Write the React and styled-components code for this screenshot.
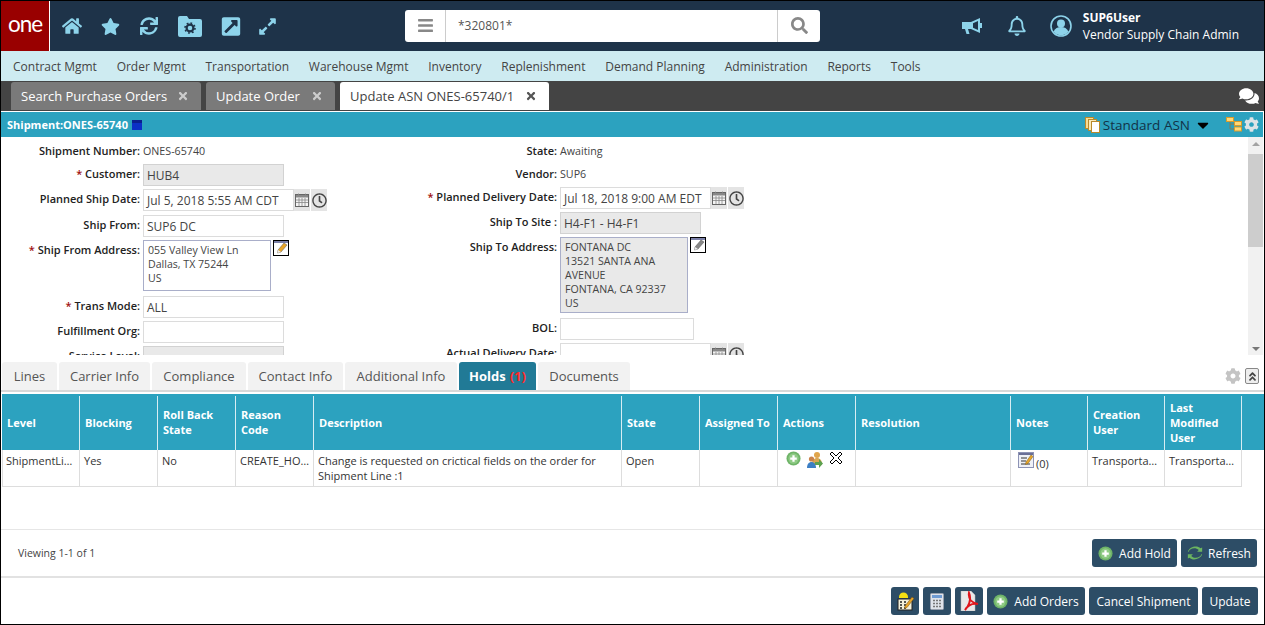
import React from "react";
import styled, { createGlobalStyle } from "styled-components";
import {
  FaHome, FaStar, FaSync, FaExpandAlt, FaRegBell, FaBars, FaSearch,
  FaTimes, FaRegClock, FaComments, FaCaretDown, FaCog, FaExternalLinkSquareAlt, FaAngleDoubleUp,
} from "react-icons/fa";

const GlobalStyle = createGlobalStyle`
  html, body { margin: 0; padding: 0; background: #fff; overflow: hidden; }
  * { box-sizing: border-box; }
  body { font-family: "Open Sans", "Liberation Sans", sans-serif; font-size: 11px; color: #333; }
`;

const Frame = styled.div`
  width: 1265px;
  height: 625px;
  border: 1px solid #000;
  display: flex;
  flex-direction: column;
  overflow: hidden;
  background: #fff;
`;

const Header = styled.header`
  height: 50px;
  background: #1e3349;
  display: flex;
  align-items: center;
  flex: none;
`;

const Logo = styled.div`
  width: 49px;
  height: 50px;
  background: #990000;
  border-right: 1px solid #fff;
  color: #fff;
  font-family: "Lato", sans-serif;
  font-weight: 400;
  font-size: 22.5px;
  letter-spacing: -1px;
  display: flex;
  align-items: center;
  justify-content: center;
  padding-bottom: 5px;
`;

const NavIcons = styled.div`
  width: 355px;
  display: flex;
  align-items: center;
  color: #8dd3ea;
  padding-left: 12px;
`;

const NavIcon = styled.span`
  width: ${(p) => p.$w}px;
  display: flex;
  justify-content: center;
  font-size: ${(p) => p.$size || 20}px;
`;

const SearchBox = styled.div`
  width: 415px;
  height: 32px;
  margin-top: -1px;
  background: #fff;
  border-radius: 3px;
  display: flex;
  color: #888;
`;

const SearchMenu = styled.div`
  width: 41px;
  border-right: 1px solid #ccc;
  display: flex;
  align-items: center;
  justify-content: center;
  font-size: 17px;
`;

const SearchText = styled.div`
  flex: 1;
  padding-left: 12px;
  line-height: 31px;
  font-size: 12px;
  color: #555;
`;

const SearchButton = styled.div`
  width: 43px;
  border-left: 1px solid #ccc;
  display: flex;
  align-items: center;
  justify-content: center;
  font-size: 17px;
`;

const HeaderRight = styled.div`
  margin-left: auto;
  display: flex;
  align-items: center;
  color: #8dd3ea;
  padding-right: 25px;
`;

const HeaderIcon = styled.span`
  display: flex;
  font-size: ${(p) => p.$size}px;
  margin-right: ${(p) => p.$mr}px;
`;

const UserText = styled.div`
  color: #fff;
  font-size: 12px;
  line-height: 17px;
  & b { display: block; font-weight: 700; }
`;

const MenuBar = styled.nav`
  height: 30px;
  flex: none;
  background: #ceebf1;
  display: flex;
  align-items: center;
  padding-left: 12px;
  gap: 19.8px;
  font-size: 12px;
  color: #444;
`;

const TabStrip = styled.div`
  height: 30px;
  flex: none;
  background: #444;
  display: flex;
  align-items: flex-end;
  padding-left: 10px;
  padding-bottom: 1px;
  gap: 5px;
`;

const PageTab = styled.div`
  height: 28px;
  width: ${(p) => p.$w}px;
  padding: 0 12px 0 10px;
  background: ${(p) => (p.$active ? "#fff" : "#7a7a7a")};
  color: ${(p) => (p.$active ? "#444" : "#fff")};
  border-radius: 3px 3px 0 0;
  display: flex;
  align-items: center;
  justify-content: space-between;
  font-size: 13px;
  & svg { color: ${(p) => (p.$active ? "#555" : "#ccc")}; font-size: 12px; }
`;

const ChatIcon = styled.span`
  margin-left: auto;
  margin-right: 5px;
  color: #fff;
  font-size: 20px;
  display: flex;
  align-self: center;
`;

const SectionBar = styled.div`
  height: 25px;
  flex: none;
  margin-top: 1px;
  margin-right: 1px;
  background: #2ca2bf;
  display: flex;
  align-items: center;
  padding: 0 4px 0 6px;
  color: #fff;
  font-weight: 700;
  font-size: 11px;
`;

const BlueBox = styled.span`
  width: 10px;
  height: 10px;
  margin-left: 4px;
  background: #0b2fc6;
  border-top: 3px solid #0a1f8f;
`;

const ViewName = styled.span`
  margin-left: auto;
  display: flex;
  align-items: center;
  gap: 2px;
  font-weight: 400;
  font-size: 13.5px;
  color: #123247;
`;

const ViewCaret = styled.span`
  display: flex;
  margin-left: 2px;
  font-size: 18px;
  color: #000;
`;

const BarIcons = styled.span`
  display: flex;
  align-items: center;
  gap: 2px;
  margin-left: 14px;
`;

const BarCog = styled.span`
  display: flex;
  color: #dde3e6;
  font-size: 15px;
`;

const FormArea = styled.div`
  height: 218px;
  flex: none;
  display: flex;
`;

const FormColumns = styled.div`
  flex: 1;
  height: 218px;
  overflow: hidden;
  display: grid;
  grid-template-columns: 417px 1fr;
  padding-top: 4px;
`;

const FormColumn = styled.div`
  display: flex;
  flex-direction: column;
  gap: 3px;
`;

const Row = styled.div`
  display: grid;
  grid-template-columns: 139px auto;
  justify-content: start;
  column-gap: 3px;
  align-items: start;
  margin-top: ${(p) => p.$top || 0}px;
`;

const Label = styled.label`
  text-align: right;
  font-weight: 600;
  line-height: 20px;
  font-size: 11px;
  color: #222;
  white-space: nowrap;
  & i { font-style: normal; color: #a01010; }
`;

const Value = styled.span`
  line-height: 20px;
  font-size: 10.7px;
  color: #444;
`;

const Input = styled.div`
  width: ${(p) => p.$w || 141}px;
  height: 22px;
  border: 1px solid ${(p) => (p.$readOnly ? "#d2d2d2" : "#dcdcdc")};
  background: ${(p) => (p.$readOnly ? "#e9e9e9" : "#fff")};
  font-size: 12px;
  color: #444;
  line-height: 21px;
  padding-left: 3px;
  white-space: nowrap;
`;

const DateField = styled.div`
  display: flex;
`;

const DateAddon = styled.span`
  width: 17px;
  height: 22px;
  background: #e4e4e4;
  border-right: 1px solid #fff;
  display: flex;
  align-items: center;
  justify-content: center;
  color: #444;
  font-size: 15px;
`;

const AddressWrap = styled.div`
  display: flex;
  align-items: flex-start;
  gap: 2px;
`;

const AddressBox = styled.div`
  width: 128px;
  height: ${(p) => p.$h}px;
  border: 1px solid #a9aec9;
  background: ${(p) => (p.$readOnly ? "#e9e9e9" : "#fff")};
  padding: 2px 4px;
  font-size: 10.6px;
  line-height: 14px;
  color: #444;
`;

const Scrollbar = styled.div`
  width: 15px;
  margin: 0 1px 0 0;
  background: #f1f1f1;
  display: flex;
  flex-direction: column;
  align-items: center;
  padding: 5px 0 4px;
`;

const Thumb = styled.div`
  width: 15px;
  height: 93px;
  background: #cdcdcd;
  margin-top: 8px;
  margin-bottom: auto;
`;

const Arrow = styled.span`
  width: 0;
  height: 0;
  border-left: 4px solid transparent;
  border-right: 4px solid transparent;
  ${(p) => (p.$down ? "border-top: 4px solid #777;" : "border-bottom: 4px solid #a3a3a3;")}
`;

const LowerTabs = styled.div`
  height: 30px;
  margin-top: 7px;
  flex: none;
  display: flex;
  align-items: flex-start;
  padding-left: 1px;
  gap: 2px;
  border-bottom: 2px solid #d8d8d8;
`;

const LowerTab = styled.div`
  height: 28px;
  width: ${(p) => p.$w}px;
  background: ${(p) => (p.$active ? "#217a96" : "#f2f2f2")};
  color: ${(p) => (p.$active ? "#fff" : "#555")};
  font-weight: ${(p) => (p.$active ? 700 : 400)};
  border-radius: 3px 3px 0 0;
  font-size: 13px;
  display: flex;
  align-items: center;
  justify-content: center;
  flex: none;
  & em { font-style: normal; color: #ff2a2a; margin-left: 4px; }
`;

const TabTools = styled.div`
  margin-left: auto;
  margin-right: 5px;
  height: 28px;
  display: flex;
  align-items: center;
  gap: 4px;
  color: #c4c4c4;
  font-size: 16px;
`;

const CollapseButton = styled.span`
  width: 14px;
  height: 16px;
  border: 1px solid #888;
  border-radius: 2px;
  background: #eee;
  color: #444;
  font-size: 11px;
  display: flex;
  align-items: center;
  justify-content: center;
`;

const TableArea = styled.div`
  height: 136px;
  flex: none;
  margin-top: 2px;
  padding-left: 1px;
  border-bottom: 1px solid #e6e6e6;
`;

const COLS = "78px 78px 78px 78px 308px 78px 78px 78px 155px 77px 77px 77px";

const HeadRow = styled.div`
  height: 56px;
  background: #2ca2bf;
  display: grid;
  grid-template-columns: ${COLS} 1fr;
`;

const HeadCell = styled.div`
  border-right: 1px solid #d7edf3;
  color: #fff;
  font-weight: 700;
  font-size: 11px;
  line-height: 15px;
  padding: 0 3px 2px 5px;
  display: flex;
  align-items: center;
  white-space: pre-line;
  margin-top: 2px;
`;

const HeadEnd = styled.div``;

const BodyRow = styled.div`
  display: grid;
  grid-template-columns: ${COLS};
  width: max-content;
  height: 37px;
  border-bottom: 1px solid #ddd;
`;

const BodyCell = styled.div`
  border-right: 1px solid #ddd;
  border-left: ${(p) => (p.$first ? "1px solid #ddd" : "0")};
  font-size: 11px;
  line-height: 15px;
  color: #333;
  padding: 3px 3px 0 ${(p) => (p.$first ? 3 : 4)}px;
  overflow: hidden;
  white-space: ${(p) => (p.$wrap ? "normal" : "nowrap")};
  text-overflow: ellipsis;
`;

const ActionIcons = styled.div`
  display: flex;
  align-items: flex-start;
  gap: 5px;
  padding-left: 4px;
  margin-top: -2px;
`;

const NoteCell = styled.div`
  display: flex;
  align-items: flex-end;
  gap: 2px;
  padding-left: 3px;
  margin-top: -1px;
`;

const NoteCount = styled.span`
  line-height: 14px;
  margin-bottom: -3px;
`;

const Pager = styled.div`
  height: 48px;
  flex: none;
  display: flex;
  align-items: center;
  justify-content: space-between;
  padding: 0 7px 0 17px;
  border-bottom: 2px solid #e2e2e2;
  font-size: 10.5px;
  color: #444;
`;

const ButtonRow = styled.div`
  display: flex;
  gap: 4px;
`;

const ActionBar = styled(ButtonRow)`
  flex: 1;
  align-items: center;
  justify-content: flex-end;
  padding: 0 6px 0 0;
`;

const Button = styled.button`
  height: 28px;
  width: ${(p) => p.$w}px;
  padding: 0;
  border: 0;
  border-radius: 3px;
  background: #2d4d66;
  color: #fff;
  font-family: inherit;
  font-size: 12px;
  display: flex;
  align-items: center;
  justify-content: center;
  gap: ${(p) => p.$gap ?? 6}px;
`;

const GreenPlus = ({ size = 15 }) => (
  <svg width={size} height={size} viewBox="0 0 16 16">
    <circle cx="8" cy="8" r="7.5" fill="#6fb468" />
    <circle cx="8" cy="8" r="5.5" fill="#8fcb85" />
    <path d="M8 4.5v7M4.5 8h7" stroke="#fff" strokeWidth="2.4" />
  </svg>
);

const AssignIcon = () => (
  <svg width="18" height="18" viewBox="0 0 18 18">
    <circle cx="11" cy="4" r="3" fill="#e0a54c" />
    <path d="M6 14c0-5 2-7 5-7s5 2 5 7z" fill="#d9a653" />
    <circle cx="5.5" cy="8" r="2.6" fill="#c9824a" />
    <path d="M1 17c0-4 2-6 4.5-6S10 13 10 17z" fill="#3d7fc4" />
    <path d="M9 11h4V8l4 4.5-4 4.5v-3H9z" fill="#5da14f" />
  </svg>
);

const CrossOutline = () => (
  <svg width="14" height="14" viewBox="0 0 14 14">
    <path d="M3 1 7 5l4-4 2 2-4 4 4 4-2 2-4-4-4 4-2-2 4-4-4-4z" fill="#fff" stroke="#000" strokeWidth="1" />
  </svg>
);

const NoteIcon = () => (
  <svg width="16" height="16" viewBox="0 0 16 16">
    <rect x="0.5" y="0.5" width="15" height="15" fill="#eef0f7" stroke="#8d93b5" />
    <rect x="1" y="1" width="14" height="2" fill="#6a6f96" />
    <path d="M3 6h6M3 9h5M3 12h9" stroke="#333" />
    <path d="M8 10l5-7 2 1.5-5 7-2.5 1z" fill="#e8a52a" stroke="#7a5a10" strokeWidth=".5" />
  </svg>
);

const EditBox = ({ grey }) => (
  <svg width="16" height="16" viewBox="0 0 16 16">
    <rect x="0.5" y="0.5" width="15" height="15" fill="#fff" stroke="#000" />
    <rect x="1" y="1" width="14" height="2" fill="#7b80a8" />
    <path d="M5 10l6-7 3 2-6 7-3.5 1z" fill={grey ? "#888" : "#e8a52a"} stroke="#555" strokeWidth=".5" />
    <path d="M5 10l3 2-3.5 1z" fill="#eee" />
  </svg>
);

const CalendarIcon = () => (
  <svg width="14" height="14" viewBox="0 0 14 14">
    <rect x="0.5" y="1.5" width="13" height="12" fill="#f4f4f4" stroke="#666" />
    <rect x="1" y="2" width="12" height="2.5" fill="#888" />
    <path d="M3.5 0.5v2.5M10.5 0.5v2.5M1 7h12M1 9.5h12M4 5v8M7 5v8M10 5v8" stroke="#888" strokeWidth=".8" />
  </svg>
);

const CopyDocs = () => (
  <svg width="16" height="16" viewBox="0 0 16 16">
    <rect x="0.5" y="0.5" width="8" height="11" fill="#f7dc97" stroke="#b98a2a" />
    <rect x="3.5" y="2.5" width="8" height="11" fill="#fbe9b8" stroke="#b98a2a" />
    <rect x="6.5" y="4.5" width="8" height="11" fill="#fff" stroke="#b98a2a" />
  </svg>
);

const TreeIcon = () => (
  <svg width="16" height="15" viewBox="0 0 16 15">
    <path d="M4 4v8h6M4 7h6" stroke="#8a7a50" fill="none" />
    <rect x="0.5" y="0.5" width="7" height="4" fill="#ffd877" stroke="#d69c2e" />
    <rect x="8.5" y="4.5" width="7" height="4" fill="#ffd877" stroke="#d69c2e" />
    <rect x="8.5" y="10" width="7" height="4" fill="#ffd877" stroke="#d69c2e" />
  </svg>
);

const FolderGear = () => (
  <svg width="24" height="21" viewBox="0 0 24 21">
    <path d="M2 0h7l2 3h11a2 2 0 0 1 2 2v14a2 2 0 0 1-2 2H2a2 2 0 0 1-2-2V2a2 2 0 0 1 2-2z" fill="#8dd3ea" />
    <circle cx="12" cy="12" r="3.4" fill="none" stroke="#1e3349" strokeWidth="2.2" />
    <circle cx="12" cy="12" r="5" fill="none" stroke="#1e3349" strokeWidth="1.6" strokeDasharray="1.8 2.1" />
  </svg>
);

const Megaphone = () => (
  <svg width="21" height="17" viewBox="0 0 21 17">
    <path d="M0 4h9v7H6l1.5 5H4.5L3 11H0z" fill="#8dd3ea" />
    <path d="M9 4l9-4v15l-9-4z" fill="#8dd3ea" />
    <path d="M11 5.3l5-2.2v8.8l-5-2.2z" fill="#1e3349" />
    <path d="M18 5h2v5h-2z" fill="#8dd3ea" />
  </svg>
);

const UserCircle = () => (
  <svg width="22" height="22" viewBox="0 0 22 22">
    <circle cx="11" cy="11" r="10" fill="#1e3349" stroke="#8dd3ea" strokeWidth="1.6" />
    <circle cx="11" cy="8.5" r="4" fill="#8dd3ea" />
    <path d="M3.6 16.5c1.5-3.3 4-4.5 7.4-4.5s5.900 1.200 7.400 4.500A9.500 9.500 0 0 1 11 20.400 9.500 9.500 0 0 1 3.600 16.500z" fill="#8dd3ea" />
  </svg>
);

const WorkerIcon = () => (
  <svg width="19" height="20" viewBox="0 0 19 20">
    <rect x="2" y="8" width="14" height="11" fill="#f3f0da" stroke="#222" />
    <path d="M4 11h2M8 11h2M4 14h2M8 14h2M4 17h2M8 17h2" stroke="#222" strokeWidth="1.4" />
    <path d="M3 6a4.500 4.500 0 0 1 9 0v1H3z" fill="#f5e012" />
    <path d="M9 15l7-9 2 1.500-7 9-2.500 1z" fill="#e8a52a" stroke="#6b4a10" strokeWidth=".5" />
  </svg>
);

const CalcIcon = () => (
  <svg width="14" height="17" viewBox="0 0 14 17">
    <rect x="0.5" y="0.5" width="13" height="16" rx="1" fill="#dfe3ea" stroke="#98a0ad" />
    <rect x="2" y="2" width="10" height="3" fill="#6f9bd2" />
    <path d="M3 7.500h2M6 7.500h2M9 7.500h2M3 10.500h2M6 10.500h2M9 10.500h2M3 13.500h2M6 13.500h2M9 13.500h2" stroke="#777" strokeWidth="1.6" />
  </svg>
);

const PdfIcon = () => (
  <svg width="19" height="20" viewBox="0 0 19 20">
    <path d="M1 0h10l4 4v16H1z" fill="#e9e9e9" stroke="#bbb" strokeWidth=".5" />
    <path d="M9 2c-1 6 3 10 9 11-5-1-10 1-13 6 3-3 7-10 4-17z" fill="none" stroke="#e0161c" strokeWidth="2" />
  </svg>
);

const RefreshIcon = () => (
  <svg width="16" height="14" viewBox="0 0 19 15">
    <path d="M2 6c1-4 8-6 12-2l-2 2h6V1l-2 1C12-2 3 0 1 6z" fill="#6cb560" />
    <path d="M17 9c-1 4-8 6-12 2l2-2H1v5l2-1c4 4 13 2 15-4z" fill="#6cb560" />
  </svg>
);

const menu = ["Contract Mgmt", "Order Mgmt", "Transportation", "Warehouse Mgmt", "Inventory", "Replenishment",
  "Demand Planning", "Administration", "Reports", "Tools"];

const lowerTabs = [["Lines", 55], ["Carrier Info", 91], ["Compliance", 94], ["Contact Info", 95], ["Additional Info", 112]];

const heads = ["Level", "Blocking", "Roll Back\nState", "Reason\nCode", "Description", "State", "Assigned To", "Actions",
  "Resolution", "Notes", "Creation\nUser", "Last\nModified\nUser"];

const DateInput = ({ value }) => (
  <DateField>
    <Input $w={151}>{value}</Input>
    <DateAddon><CalendarIcon /></DateAddon>
    <DateAddon><FaRegClock /></DateAddon>
  </DateField>
);

export default function App() {
  return (
    <Frame>
      <GlobalStyle />
      <Header>
        <Logo>one</Logo>
        <NavIcons>
          <NavIcon $w={20}><FaHome /></NavIcon>
          <NavIcon $w={57} $size={19}><FaStar /></NavIcon>
          <NavIcon $w={20} $size={18}><FaSync /></NavIcon>
          <NavIcon $w={62}><FolderGear /></NavIcon>
          <NavIcon $w={20} $size={21}><FaExternalLinkSquareAlt /></NavIcon>
          <NavIcon $w={53} $size={19}><FaExpandAlt /></NavIcon>
        </NavIcons>
        <SearchBox>
          <SearchMenu><FaBars /></SearchMenu>
          <SearchText>*320801*</SearchText>
          <SearchButton><FaSearch /></SearchButton>
        </SearchBox>
        <HeaderRight>
          <HeaderIcon $size={20} $mr={24}><Megaphone /></HeaderIcon>
          <HeaderIcon $size={20} $mr={23}><FaRegBell /></HeaderIcon>
          <HeaderIcon $size={22} $mr={11}><UserCircle /></HeaderIcon>
          <UserText><b>SUP6User</b>Vendor Supply Chain Admin</UserText>
        </HeaderRight>
      </Header>

      <MenuBar>
        {menu.map((m) => <span key={m}>{m}</span>)}
      </MenuBar>

      <TabStrip>
        <PageTab $w={190}>Search Purchase Orders <FaTimes /></PageTab>
        <PageTab $w={129}>Update Order <FaTimes /></PageTab>
        <PageTab $w={209} $active>Update ASN ONES-65740/1 <FaTimes /></PageTab>
        <ChatIcon><FaComments /></ChatIcon>
      </TabStrip>

      <SectionBar>
        Shipment:ONES-65740<BlueBox />
        <ViewName>
          <CopyDocs />Standard ASN
          <ViewCaret><FaCaretDown /></ViewCaret>
        </ViewName>
        <BarIcons>
          <TreeIcon />
          <BarCog><FaCog /></BarCog>
        </BarIcons>
      </SectionBar>

      <FormArea>
        <FormColumns>
          <FormColumn>
            <Row><Label>Shipment Number:</Label><Value>ONES-65740</Value></Row>
            <Row><Label><i>*</i> Customer:</Label><Input $readOnly>HUB4</Input></Row>
            <Row><Label>Planned Ship Date:</Label><DateInput value="Jul 5, 2018 5:55 AM CDT" /></Row>
            <Row $top={1}><Label>Ship From:</Label><Input>SUP6 DC</Input></Row>
            <Row>
              <Label><i>*</i> Ship From Address:</Label>
              <AddressWrap>
                <AddressBox $h={51}>055 Valley View Ln<br />Dallas, TX 75244<br />US</AddressBox>
                <EditBox />
              </AddressWrap>
            </Row>
            <Row $top={2}><Label><i>*</i> Trans Mode:</Label><Input>ALL</Input></Row>
            <Row><Label>Fulfillment Org:</Label><Input /></Row>
            <Row><Label>Service Level:</Label><Input $readOnly /></Row>
          </FormColumn>
          <FormColumn>
            <Row><Label>State:</Label><Value>Awaiting</Value></Row>
            <Row><Label>Vendor:</Label><Value>SUP6</Value></Row>
            <Row><Label><i>*</i> Planned Delivery Date:</Label><DateInput value="Jul 18, 2018 9:00 AM EDT" /></Row>
            <Row><Label>Ship To Site :</Label><Input $readOnly>H4-F1 - H4-F1</Input></Row>
            <Row>
              <Label>Ship To Address:</Label>
              <AddressWrap>
                <AddressBox $h={76} $readOnly>FONTANA DC<br />13521 SANTA ANA AVENUE<br />FONTANA, CA 92337<br />US</AddressBox>
                <EditBox grey />
              </AddressWrap>
            </Row>
            <Row $top={2}><Label>BOL:</Label><Input $w={134} /></Row>
            <Row><Label>Actual Delivery Date:</Label><DateInput value="" /></Row>
          </FormColumn>
        </FormColumns>
        <Scrollbar>
          <Arrow />
          <Thumb />
          <Arrow $down />
        </Scrollbar>
      </FormArea>

      <LowerTabs>
        {lowerTabs.map(([t, w]) => <LowerTab key={t} $w={w}>{t}</LowerTab>)}
        <LowerTab $w={77} $active>Holds <em>(1)</em></LowerTab>
        <LowerTab $w={92}>Documents</LowerTab>
        <TabTools>
          <FaCog />
          <CollapseButton><FaAngleDoubleUp /></CollapseButton>
        </TabTools>
      </LowerTabs>

      <TableArea>
        <HeadRow>
          {heads.map((h) => <HeadCell key={h}>{h}</HeadCell>)}
          <HeadEnd />
        </HeadRow>
        <BodyRow>
          <BodyCell $first>ShipmentLine</BodyCell>
          <BodyCell>Yes</BodyCell>
          <BodyCell>No</BodyCell>
          <BodyCell>CREATE_HOLD</BodyCell>
          <BodyCell $wrap>Change is requested on crictical fields on the order for Shipment Line :1</BodyCell>
          <BodyCell>Open</BodyCell>
          <BodyCell />
          <BodyCell><ActionIcons><GreenPlus /><AssignIcon /><CrossOutline /></ActionIcons></BodyCell>
          <BodyCell />
          <BodyCell><NoteCell><NoteIcon /><NoteCount>(0)</NoteCount></NoteCell></BodyCell>
          <BodyCell>Transportation</BodyCell>
          <BodyCell>Transportation</BodyCell>
        </BodyRow>
      </TableArea>

      <Pager>
        <span>Viewing 1-1 of 1</span>
        <ButtonRow>
          <Button $w={85}><GreenPlus />Add Hold</Button>
          <Button $w={76} $gap={5}><RefreshIcon />Refresh</Button>
        </ButtonRow>
      </Pager>

      <ActionBar>
        <Button $w={28}><WorkerIcon /></Button>
        <Button $w={28}><CalcIcon /></Button>
        <Button $w={28}><PdfIcon /></Button>
        <Button $w={98}><GreenPlus />Add Orders</Button>
        <Button $w={109}>Cancel Shipment</Button>
        <Button $w={56}>Update</Button>
      </ActionBar>
    </Frame>
  );
}
